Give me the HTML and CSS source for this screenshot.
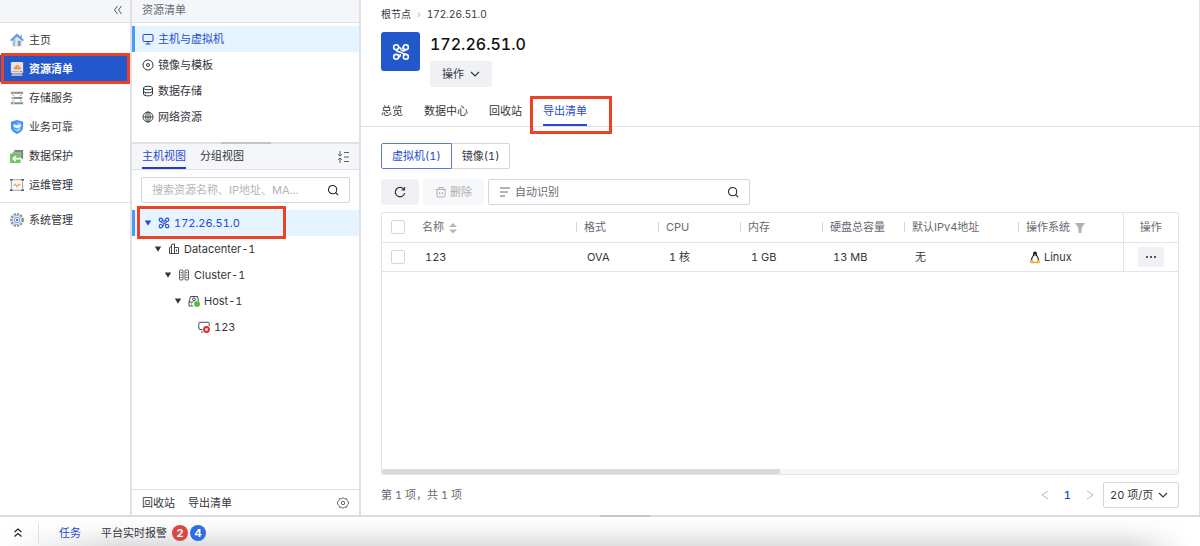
FILE: index.html
```html
<!DOCTYPE html>
<html lang="zh-CN">
<head>
    <meta charset="UTF-8">
    <meta name="viewport" content="width=device-width, initial-scale=1.0">
    <title>资源清单</title>
    <link rel="stylesheet" href="styles.css">
</head>
<body>

    <!-- 公用图标 -->
    <svg class="symbols" aria-hidden="true">
        <symbol id="i-node" viewBox="0 0 16 16">
            <g fill="none" stroke="currentColor" stroke-width="1.400">
                <circle cx="3.700" cy="3.700" r="2.200"/><circle cx="12.300" cy="3.700" r="2.200"/>
                <circle cx="3.700" cy="12.300" r="2.200"/><circle cx="12.300" cy="12.300" r="2.200"/>
                <path d="M5.900 3.700c2.300 0 1.600 3.300 4 3.300 1.200 0 2-.5 2.400-1.100M3.700 5.900c.5 2.500 3 1.600 4.600 2.600 1.500 1 1.800 1.600 4 1.600M10.100 3.700L9 5M5.900 12.300c1.600 0 1.400-1.400 1.400-2.600"/>
            </g>
        </symbol>
        <symbol id="i-search" viewBox="0 0 16 16">
            <g fill="none" stroke="currentColor" stroke-width="1.4" stroke-linecap="round"><circle cx="7.500" cy="7.500" r="5.500"/><path d="M11.500 11.500l3 3"/></g>
        </symbol>
        <symbol id="i-caret" viewBox="0 0 10 10"><path d="M1 2h8L5 8.500z" fill="currentColor"/></symbol>
        <symbol id="i-down" viewBox="0 0 10 10"><path d="M1 3l4 4 4-4" fill="none" stroke="currentColor" stroke-width="1.200"/></symbol>
    </svg>

    <div class="app">
        <!-- 主导航 -->
        <nav class="sidebar">
            <div class="bar bar-right">
                <button class="icon-btn" aria-label="收起">
                    <svg class="icon" viewBox="0 0 12 12"><path d="M5.500 2L2.500 6l3 4M9.500 2l-3 4 3 4" fill="none" stroke="#555a66"/></svg>
                </button>
            </div>
            <div class="nav-list">
                <a class="nav-item" href="#">
                    <svg class="nav-icon" viewBox="0 0 16 16"><path d="M3 7v8h11V7L8.500 3z" fill="#dfe3ea"/><path d="M9 9h3v6H9z" fill="#8b97a8"/><path d="M12 2h1.500v4H12z" fill="#77a9e8"/><path d="M3 8l3-2.500V15H3z" fill="#b5bdc9"/><path d="M0 8l8-7.500L16 8l-1.500 1.500L8 4 1.500 9.500z" fill="#559df0"/></svg>
                    主页
                </a>
                <a class="nav-item active marked" href="#">
                    <svg class="nav-icon" viewBox="0 0 16 16"><rect x="1" y="0" width="14" height="13" rx="1.500" fill="#e3e5ea"/><path d="M3 13h10l2 3H1z" fill="#aeb4c0"/><path d="M5 8.500c-2-2 .5-3.500 1.200-3.500 1-2.500 4.500-1.500 4.500.5 2.500 0 2.500 3 .5 3z" fill="#f59a35"/><path d="M2 11h8" stroke="#9aa1ad"/><path d="M11.500 11h2" stroke="#4d5560"/></svg>
                    资源清单
                </a>
                <a class="nav-item" href="#">
                    <svg class="nav-icon" viewBox="0 0 16 16"><path d="M1 2h14M2 8h12M1 14h14" stroke="#888c95" stroke-width="2.400"/><path d="M2 4l3 2M14 4l-3 2M2 12l3-2M14 12l-3-2" stroke="#9a9da4"/><path d="M3 8h2M3 14h2" stroke="#e4e5e8"/><path d="M3 2h3" stroke="#ed8a68"/></svg>
                    存储服务
                </a>
                <a class="nav-item" href="#">
                    <svg class="nav-icon" viewBox="0 0 16 16"><path d="M8 0l7 2v6c0 4-3.500 6.500-7 8-3.500-1.500-7-4-7-8V2z" fill="#4695ef"/><path d="M8 2l5 1.500V8c0 3.500-2.500 5-5 6z" fill="#77b7fa"/><path d="M4 4.500L8 6l4-1.500V8L8 9.500 4 8z" fill="#f3f8ff"/><path d="M5 10.500l3 1.500 3-1.500" stroke="#d8eaff" fill="none"/></svg>
                    业务可靠
                </a>
                <a class="nav-item" href="#">
                    <svg class="nav-icon" viewBox="0 0 16 16"><path d="M5 1h10v10h-3V4H5z" fill="#777d86"/><path d="M3 3h10v10h-3V6H3z" fill="#a5acb1"/><rect x="0" y="5" width="12" height="11" rx="1" fill="#6cc95c"/><path d="M13 11H4M6.500 8L3.500 11l3 3" fill="none" stroke="#fff" stroke-width="1.800"/></svg>
                    数据保护
                </a>
                <a class="nav-item" href="#">
                    <svg class="nav-icon" viewBox="0 0 16 16"><rect x="1.500" y="2" width="13" height="12" fill="#fafafa" stroke="#92959c"/><path d="M0 2h16M0 14h16" stroke="#50545c" stroke-width="1.500" stroke-dasharray="3 10"/><path d="M4 9l2-2 2 3 2-3 2 1.500" fill="none" stroke="#f0a044" stroke-width="1.200"/></svg>
                    运维管理
                </a>
            </div>
            <div class="nav-list nav-bottom">
                <a class="nav-item" href="#">
                    <svg class="nav-icon" viewBox="0 0 16 16"><circle cx="8" cy="8" r="6.800" fill="none" stroke="#8f949d" stroke-width="2.400" stroke-dasharray="2.600 1.300"/><circle cx="8" cy="8" r="5.300" fill="#e8ebf0" stroke="#a4a9b2"/><circle cx="8" cy="8" r="3" fill="#fff" stroke="#5f92e9"/><circle cx="8" cy="8" r="1.300" fill="#3976dd"/></svg>
                    系统管理
                </a>
            </div>
        </nav>

        <!-- 资源面板 -->
        <aside class="panel">
            <div class="bar bar-title">资源清单</div>
            <div class="menu">
                <a class="menu-item active" href="#">
                    <svg class="icon" viewBox="0 0 12 12"><g fill="none" stroke="currentColor"><rect x="1" y="1.500" width="10" height="7" rx="1"/><path d="M6 8.500V11M3.500 11h5"/></g></svg>
                    主机与虚拟机
                </a>
                <a class="menu-item" href="#">
                    <svg class="icon" viewBox="0 0 12 12"><g fill="none" stroke="currentColor"><circle cx="6" cy="6" r="5"/><circle cx="6" cy="6" r="1.500"/></g></svg>
                    镜像与模板
                </a>
                <a class="menu-item" href="#">
                    <svg class="icon" viewBox="0 0 12 12"><g fill="none" stroke="currentColor"><ellipse cx="6" cy="3" rx="4.500" ry="1.800"/><path d="M1.500 3v6c0 2.500 9 2.500 9 0V3M1.500 6c0 2.300 9 2.300 9 0M3 9h1"/></g></svg>
                    数据存储
                </a>
                <a class="menu-item" href="#">
                    <svg class="icon" viewBox="0 0 12 12"><g fill="none" stroke="currentColor" stroke-width=".9"><circle cx="6" cy="6" r="5"/><ellipse cx="6" cy="6" rx="2.200" ry="5"/><path d="M1 6h10M6 1v10"/></g></svg>
                    网络资源
                </a>
            </div>
            <div class="splitter"><span class="grip"></span></div>
            <div class="view-tabs">
                <button class="view-tab active">主机视图</button>
                <button class="view-tab">分组视图</button>
                <button class="icon-btn push" aria-label="折叠">
                    <svg class="icon" viewBox="0 0 12 12"><path d="M3 0v5M1 3.200L3 5l2-1.800M3 12V7M1 8.800L3 7l2 1.800M7 1.500h5M7 6h5M7 10.500h5" fill="none" stroke="#4b4f59" stroke-width=".9"/></svg>
                </button>
            </div>
            <div class="tree-search">
                <label class="search-box">
                    <input type="text" placeholder="搜索资源名称、IP地址、MA..." aria-label="搜索资源">
                    <svg class="icon"><use href="#i-search"/></svg>
                </label>
            </div>
            <div class="tree">
                <a class="tree-item level-0 active" href="#">
                    <svg class="caret"><use href="#i-caret"/></svg>
                    <svg class="icon"><use href="#i-node"/></svg>
                    172.26.51.0
                    <span class="tree-mark"></span>
                </a>
                <a class="tree-item level-1" href="#">
                    <svg class="caret"><use href="#i-caret"/></svg>
                    <svg class="icon" viewBox="0 0 12 12"><path d="M3.500 10.500h-2v-6l2-1M3.500 10.500v-9l3-.7v9.700zM6.500 4.500h4v6h-4M8.500 6.500v2" fill="none" stroke="currentColor" stroke-width=".9"/></svg>
                    Datacenter-1
                </a>
                <a class="tree-item level-2" href="#">
                    <svg class="caret"><use href="#i-caret"/></svg>
                    <svg class="icon" viewBox="0 0 12 12"><g fill="none" stroke="currentColor" stroke-width=".8"><rect x="1.500" y="1" width="3.500" height="10" rx="1"/><rect x="7" y="1" width="3.500" height="10" rx="1"/><path d="M2.500 3.500h1.500M2.500 6h1.500M2.500 8.500h1.500M8 3.500h1.500M8 6h1.500M8 8.500h1.500"/></g></svg>
                    Cluster-1
                </a>
                <a class="tree-item level-3" href="#">
                    <svg class="caret"><use href="#i-caret"/></svg>
                    <svg class="icon" viewBox="0 0 12 12"><path d="M5 11H1V7l1.500-5.500h7L10.500 6M1 7h4.500M3 9h1" fill="none" stroke="currentColor" stroke-width=".9"/><circle cx="6" cy="4.300" r="1.400" fill="none" stroke="currentColor" stroke-width=".9"/><circle cx="9" cy="9" r="3" fill="#52c234"/></svg>
                    Host-1
                </a>
                <a class="tree-item level-4" href="#">
                    <svg class="caret"></svg>
                    <svg class="icon" viewBox="0 0 12 12"><path d="M4.500 8.500H2a1.200 1.200 0 0 1-1.200-1.200V2.500A1.200 1.200 0 0 1 2 1.300h8a1.200 1.200 0 0 1 1.200 1.200V5M3 11h2" fill="none" stroke="currentColor" stroke-width=".9"/><circle cx="8.500" cy="8.500" r="3.400" fill="#e02d35"/><rect x="7.300" y="7.300" width="2.400" height="2.400" fill="#fff"/></svg>
                    123
                </a>
            </div>
            <div class="panel-foot">
                <a href="#">回收站</a>
                <a href="#">导出清单</a>
                <button class="icon-btn push" aria-label="设置">
                    <svg class="icon" viewBox="0 0 12 12"><g fill="none" stroke="#555" stroke-width=".9"><path d="M4.500 1.800L6 .7l1.500 1.100 2-.2.600 2L11.500 5v2l-1.400 1.400-.6 2-2-.2L6 11.300l-1.500-1.100-2 .2-.6-2L.5 7V5l1.400-1.400.6-2z"/><circle cx="6" cy="6" r="1.700"/></g></svg>
                </button>
            </div>
        </aside>

        <!-- 内容区 -->
        <main class="content">
            <div class="crumbs">
                <a href="#">根节点</a>
                <span class="crumb-sep">›</span>
                <span>172.26.51.0</span>
            </div>
            <div class="head">
                <div class="head-icon"><svg><use href="#i-node"/></svg></div>
                <div class="head-text">
                    <h1>172.26.51.0</h1>
                    <button class="btn">操作 <svg class="chevron"><use href="#i-down"/></svg></button>
                </div>
            </div>
            <div class="tabs">
                <a class="tab" href="#">总览</a>
                <a class="tab" href="#">数据中心</a>
                <a class="tab" href="#">回收站</a>
                <a class="tab active" href="#">导出清单<span class="tab-mark"></span></a>
            </div>
            <div class="body">
                <div class="segment">
                    <button class="seg active">虚拟机(1)</button>
                    <button class="seg">镜像(1)</button>
                </div>
                <div class="toolbar">
                    <button class="btn btn-refresh" aria-label="刷新">
                        <svg class="icon" viewBox="0 0 12 12"><path d="M10 3.500A4.700 4.700 0 1 0 10.700 7M10.500 1v3h-3" fill="none" stroke="currentColor" stroke-width="1.200"/></svg>
                    </button>
                    <button class="btn" disabled>
                        <svg class="icon" viewBox="0 0 12 12"><path d="M1 3.500h10M4 3.500v-2h4v2M2 3.500V10q0 1 1 1h6q1 0 1-1V3.500M4.700 6v2.500M7.300 6v2.500" fill="none" stroke="currentColor"/></svg>
                        删除
                    </button>
                    <label class="search-box search-wide">
                        <svg class="icon" viewBox="0 0 12 12"><path d="M1 2h10M1 6h8M1 10h5" stroke="#666b75"/></svg>
                        <input type="text" placeholder="自动识别" aria-label="搜索">
                        <svg class="icon"><use href="#i-search"/></svg>
                    </label>
                </div>
                <div class="table-wrap">
                    <table class="table">
                        <colgroup>
                            <col class="col-check"><col><col class="col-std"><col class="col-std"><col class="col-std"><col class="col-std"><col class="col-ip"><col class="col-os"><col class="col-act">
                        </colgroup>
                        <thead>
                            <tr>
                                <th class="check"><input type="checkbox" aria-label="全选"></th>
                                <th class="first">名称 <svg class="sort" viewBox="0 0 8 12"><path d="M0 5l4-4 4 4zM0 7.500l4 4 4-4z" fill="#b5b8bf"/></svg></th>
                                <th>格式</th>
                                <th>CPU</th>
                                <th>内存</th>
                                <th>硬盘总容量</th>
                                <th>默认IPv4地址</th>
                                <th>操作系统 <svg class="filter" viewBox="0 0 10 10"><path d="M0 0h10L6.500 5v5h-3V5z" fill="#afb1b6"/></svg></th>
                                <th class="act">操作</th>
                            </tr>
                        </thead>
                        <tbody>
                            <tr>
                                <td class="check"><input type="checkbox" aria-label="选择 123"></td>
                                <td>123</td>
                                <td>OVA</td>
                                <td>1 核</td>
                                <td>1 GB</td>
                                <td>13 MB</td>
                                <td>无</td>
                                <td><svg class="tux" viewBox="0 0 12 13"><path d="M6 .5c1.800 0 2 1.500 2 3 0 1.500 2.500 3.500 2.300 6.500L8 12H4l-2.300-2C1.500 7 4 5 4 3.500c0-1.500.2-3 2-3z" fill="#222"/><path d="M6 4.500c1.700 0 3 3 2.800 5L7.500 11.500h-3L3.200 9.500c-.2-2 1.100-5 2.800-5z" fill="#fff"/><path d="M4.800 3.500h2.400L6 5zM.5 11.500l2-3 2.700 2.500-.7 1.800zM11.500 11.500l-2-3L6.800 11l.7 1.800z" fill="#f5b52d"/></svg> Linux</td>
                                <td class="act"><button class="btn btn-more" aria-label="更多"><svg class="icon" viewBox="0 0 12 12"><g fill="#222"><circle cx="2" cy="6" r="1"/><circle cx="6" cy="6" r="1"/><circle cx="10" cy="6" r="1"/></g></svg></button></td>
                            </tr>
                        </tbody>
                    </table>
                    <div class="scroll-track"><div class="scroll-thumb"></div></div>
                </div>
                <div class="pager">
                    <span class="total">第 1 项，共 1 项</span>
                    <button class="icon-btn muted" aria-label="上一页"><svg class="chevron" viewBox="0 0 10 10"><path d="M8 1L2 5l6 4" fill="none" stroke="currentColor"/></svg></button>
                    <button class="page">1</button>
                    <button class="icon-btn muted" aria-label="下一页"><svg class="chevron" viewBox="0 0 10 10"><path d="M2 1l6 4-6 4" fill="none" stroke="currentColor"/></svg></button>
                    <div class="select">
                        <select aria-label="每页条数"><option>20 项/页</option><option>50 项/页</option></select>
                        <svg class="chevron"><use href="#i-down"/></svg>
                    </div>
                </div>
            </div>
        </main>
    </div>

    <!-- 底部任务栏 -->
    <footer class="taskbar">
        <span class="grip"></span>
        <button class="icon-btn expand" aria-label="展开">
            <svg class="icon" viewBox="0 0 12 12"><path d="M2.500 5L6 2l3.500 3M2.500 9.500l3.500-3 3.500 3" fill="none" stroke="#222" stroke-width="1.200"/></svg>
        </button>
        <a class="task-link active" href="#">任务</a>
        <a class="task-link" href="#">平台实时报警</a>
        <span class="badge badge-red">2</span>
        <span class="badge badge-blue">4</span>
    </footer>

</body>
</html>
```
FILE: styles.css
```css
* {
    margin: 0;
    padding: 0;
    box-sizing: border-box;
}

body {
    display: flex;
    flex-direction: column;
    height: 100vh;
    background: #fff;
    color: #33363d;
    font-family: Inter, "Noto Sans CJK SC", sans-serif;
    font-size: 11px;
    line-height: 16px;
    font-variant-numeric: tabular-nums;
}

a {
    color: inherit;
    text-decoration: none;
}

button, input, select {
    font: inherit;
    color: inherit;
    border: none;
    background: none;
}

button {
    cursor: pointer;
}

.symbols {
    display: none;
}

.icon {
    width: 12px;
    height: 12px;
    flex: none;
}

.chevron {
    width: 10px;
    height: 10px;
    flex: none;
}

.icon-btn {
    display: flex;
    align-items: center;
}

.push {
    margin-left: auto;
}

.app {
    flex: 1;
    display: flex;
    min-height: 0;
}

/* 左侧导航 */
.sidebar {
    width: 132px;
    flex: none;
    border-right: 2px solid #dfe0e7;
}

.bar {
    height: 23px;
    padding: 0 10px 3px;
    display: flex;
    align-items: center;
    background: #f5f6fa;
    border-bottom: 1px solid #dfe0e6;
    color: #666a73;
}

.bar-right {
    justify-content: flex-end;
    padding-right: 6px;
}

.nav-list {
    display: flex;
    flex-direction: column;
    gap: 2px;
    padding: 3px 0 4px;
}

.nav-item {
    display: flex;
    align-items: center;
    gap: 5px;
    height: 27px;
    padding-left: 10px;
}

.nav-icon {
    width: 14px;
    height: 14px;
}

.nav-item.active {
    background: #2358cd;
    color: #fff;
    font-weight: bold;
}

.nav-bottom {
    border-top: 1px solid #dfe0e6;
}

/* 红色标记框 */
.marked {
    position: relative;
}

.marked::after {
    content: "";
    position: absolute;
    inset: -2px 0 -2px 1px;
    border: 3px solid #ec4125;
}

.tree-mark, .tab-mark {
    position: absolute;
    border: 3px solid #ec4125;
}

.tree-mark {
    inset: -4px 73px -3px 2px;
}

.tab-mark {
    inset: 1px -25px -10px -13px;
}

/* 资源面板 */
.panel {
    width: 229px;
    flex: none;
    display: flex;
    flex-direction: column;
    border-right: 2px solid #dfe0e7;
}

.menu {
    padding: 3px 0 12px;
}

.menu-item, .tree-item {
    display: flex;
    align-items: center;
    height: 26px;
    gap: 4px;
    border-left: 3px solid transparent;
}

.menu-item {
    padding-left: 7px;
}

.menu-item.active, .tree-item.active {
    background: #e6f4ff;
    border-left-color: #4a9bf5;
    color: #2549cf;
}

.splitter {
    height: 2px;
    background: #dfe0e6;
}

.grip {
    display: block;
    width: 50px;
    height: 2px;
    margin: 0 auto;
    background: #c4c5ca;
}

.view-tabs {
    display: flex;
    align-items: center;
    gap: 14px;
    height: 26px;
    padding: 0 10px;
    background: #f5f6fa;
    border-bottom: 1px solid #dfe0e6;
}

.view-tab {
    height: 25px;
    border-bottom: 2px solid transparent;
}

.view-tab.active {
    color: #2549cf;
    border-bottom-color: #1c3ad4;
}

.tree-search {
    padding: 7px 9px;
}

.search-box {
    display: flex;
    align-items: center;
    gap: 4px;
    height: 26px;
    padding: 0 10px;
    border: 1px solid #d5d6da;
    border-radius: 2px;
    background: #fff;
}

.search-box input {
    flex: 1;
    min-width: 0;
    outline: none;
}

.search-box input::placeholder {
    color: #b3b5ba;
}

.search-box .icon:last-child {
    color: #222;
}

.tree {
    flex: 1;
}

.tree-item {
    position: relative;
}

.caret {
    width: 8px;
    height: 8px;
    margin-right: 2px;
}

.level-0 { padding-left: 9px; }
.level-1 { padding-left: 19px; }
.level-2 { padding-left: 29px; }
.level-3 { padding-left: 39px; }
.level-4 { padding-left: 49px; }

.panel-foot {
    display: flex;
    align-items: center;
    gap: 13px;
    height: 26px;
    padding: 0 10px;
    border-top: 1px solid #dfe0e6;
}

/* 内容区 */
.content {
    flex: 1;
    min-width: 0;
    display: flex;
    flex-direction: column;
    border-right: 1px solid #dfe0e4;
}

.crumbs {
    display: flex;
    gap: 6px;
    padding: 6px 20px 0;
    font-size: 10px;
}

.crumb-sep {
    color: #b5b8bf;
}

.head {
    display: flex;
    gap: 10px;
    padding: 10px 20px 8px;
}

.head-icon {
    display: flex;
    align-items: center;
    justify-content: center;
    width: 39px;
    height: 39px;
    border-radius: 3px;
    background: #2358cd;
    color: #fff;
}

.head-icon svg {
    width: 18px;
    height: 18px;
}

h1 {
    font-size: 16px;
    line-height: 24px;
    font-weight: 500;
    color: #111;
    margin-bottom: 5px;
}

.btn {
    display: inline-flex;
    align-items: center;
    gap: 6px;
    height: 26px;
    padding: 0 12px;
    border-radius: 2px;
    background: #f0f1f5;
}

.btn:disabled {
    gap: 3px;
    background: #f7f8fa;
    color: #aeb0b6;
    cursor: default;
}

.btn-refresh {
    padding: 0 13px;
}

.tabs {
    display: flex;
    gap: 21px;
    padding: 0 20px;
    border-bottom: 1px solid #dfe0e6;
}

.tab {
    position: relative;
    height: 31px;
    padding: 8px 0 0;
    border-bottom: 2px solid transparent;
}

.tab.active {
    color: #2549cf;
    border-bottom-color: #2549cf;
}

.body {
    flex: 1;
    display: flex;
    flex-direction: column;
    padding: 16px 20px 7px;
}

.segment {
    display: flex;
    margin-bottom: 10px;
}

.seg {
    height: 26px;
    padding: 0 10px;
    border: 1px solid #d5d6da;
    border-left: none;
    border-radius: 0 2px 2px 0;
}

.seg.active {
    border: 1px solid #5f78dd;
    border-radius: 2px 0 0 2px;
    color: #2549cf;
}

.toolbar {
    display: flex;
    gap: 4px;
    margin-bottom: 7px;
}

.search-wide {
    width: 262px;
}

.search-wide input::placeholder {
    color: #666a73;
}

.table-wrap {
    flex: 1;
    display: flex;
    flex-direction: column;
    border: 1px solid #e3e4e8;
    border-radius: 2px;
}

.table {
    width: 100%;
    table-layout: fixed;
    border-collapse: collapse;
}

.col-check { width: 32px; }
.col-std { width: 82px; }
.col-ip { width: 114px; }
.col-os { width: 105px; }
.col-act { width: 55px; }

.table th, .table td {
    height: 29px;
    text-align: left;
    border-bottom: 1px solid #e3e4e8;
    white-space: nowrap;
}

.table th {
    padding-left: 8px;
    font-weight: normal;
    color: #666a73;
    background: linear-gradient(#d5d6da, #d5d6da) 0 50% / 1px 10px no-repeat;
}

.table td {
    padding-left: 11px;
}

.table .check {
    padding: 0 0 0 9px;
    background: none;
}

.table th.first {
    background: none;
}

.table .act {
    padding: 0;
    text-align: center;
    background: none;
    border-left: 1px solid #e3e4e8;
}

.table svg {
    vertical-align: middle;
}

.table input {
    display: block;
    appearance: none;
    width: 14px;
    height: 14px;
    border: 1px solid #d5d6da;
    border-radius: 2px;
}

.table input:checked {
    background: #2358cd;
}

.sort {
    width: 8px;
    height: 12px;
    margin-left: 2px;
}

.filter {
    width: 10px;
    height: 10px;
    margin-left: 2px;
}

.tux {
    width: 12px;
    height: 13px;
}

.btn-more {
    height: 20px;
    padding: 0 7px;
    vertical-align: middle;
}

.scroll-track {
    height: 5px;
    margin-top: auto;
    background: #f5f6fa;
}

.scroll-thumb {
    width: 50%;
    height: 5px;
    border-radius: 2px;
    background: #d8dade;
}

.pager {
    display: flex;
    align-items: center;
    gap: 14px;
    padding-top: 7px;
}

.total {
    margin-right: auto;
    color: #666a73;
}

.muted {
    color: #b5b8bf;
}

.page {
    color: #2549cf;
    font-weight: 500;
}

.pager .select {
    margin-left: -6px;
}

.select {
    display: flex;
    align-items: center;
    height: 26px;
    padding: 0 10px 0 6px;
    gap: 4px;
    border: 1px solid #d5d6da;
    border-radius: 2px;
}

.select select {
    appearance: none;
    outline: none;
}

/* 底部任务栏 */
.taskbar {
    position: relative;
    display: flex;
    align-items: center;
    height: 31px;
    padding: 3px 12px 0;
    border-top: 2px solid #dcdce0;
    background:
        linear-gradient(90deg, #fff, rgba(255, 255, 255, 0) 10%, rgba(255, 255, 255, 0) 94%, #fff 99%),
        linear-gradient(#fff, #f8f8f8 40%, #dedede);
}

.taskbar .grip {
    position: absolute;
    top: -2px;
    left: 50%;
}

.expand {
    padding-right: 14px;
    height: 20px;
    border-right: 1px solid #dfe0e6;
    margin-right: 20px;
}

.task-link {
    margin-right: 20px;
}

.task-link:not(.active) {
    margin-right: 5px;
}

.task-link.active {
    color: #2549cf;
}

.badge {
    width: 16px;
    height: 16px;
    margin-right: 2px;
    border-radius: 8px;
    color: #fff;
    font-weight: bold;
    text-align: center;
}

.badge-red {
    background: #db4545;
}

.badge-blue {
    background: #316be5;
}
```
